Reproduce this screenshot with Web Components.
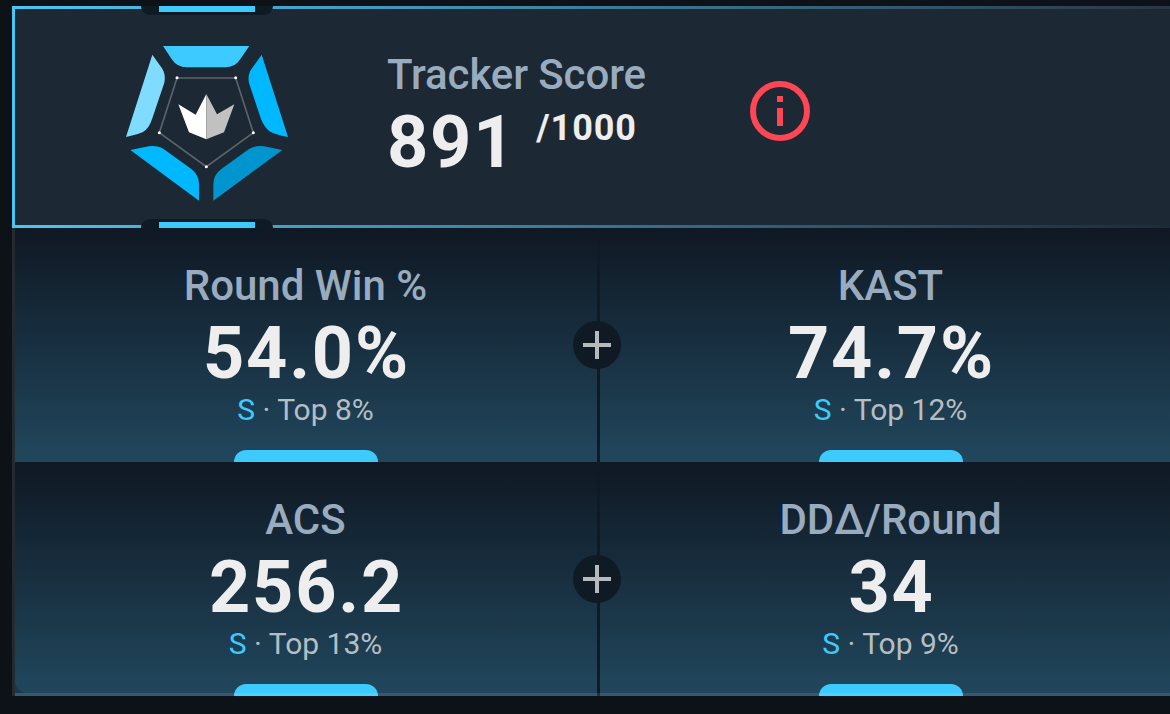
<!DOCTYPE html>
<html lang="en">
<head>
<meta charset="utf-8">
<title>Tracker Score</title>
<style>
    :root {
        --bg: #0d1218;
        --notch: #0f1a24;
        --surface: #1c2833;
        --accent: #3dcbff;
        --label: #99abbf;
        --value: #eeeeee;
        --muted: #b5bec4;
        --danger: #ff4655;
    }

    html, body {
        margin: 0;
        height: 100%;
        overflow: hidden;
        background: var(--bg);
        font-family: Roboto, sans-serif;
    }
</style>
</head>
<body>
<score-card>
    <score-header slot="header" value="891" max="1000">Tracker Score</score-header>
    <stat-row>
        <stat-cell value="54.0%" rank="S" top="Top 8%">Round Win %</stat-cell>
        <stat-cell value="74.7%" rank="S" top="Top 12%">KAST</stat-cell>
    </stat-row>
    <stat-row>
        <stat-cell value="256.2" rank="S" top="Top 13%">ACS</stat-cell>
        <stat-cell value="34" rank="S" top="Top 9%">DDΔ/Round</stat-cell>
    </stat-row>
</score-card>

<script>
function makeTemplate(css, html) {
    const template = document.createElement("template");
    template.innerHTML = `<style>${css}</style>${html}`;
    return template;
}

const cardTemplate = makeTemplate(/*css*/`
    :host {
        display: block;
        box-sizing: border-box;
        width: 1173px;
        padding: 6px 0 0 12px;
    }

    .rows {
        position: relative;
        width: 1167px;
        padding-left: 3px;
    }

    .frame {
        position: absolute;
        inset: 0;
        box-sizing: border-box;
        border: solid rgba(255, 255, 255, .1);
        border-width: 0 0 3px 3px;
        background: radial-gradient(circle at 100% 0, transparent 14px, rgba(15, 26, 36, .3) 15px) 0 100% / 14px 14px no-repeat;
        pointer-events: none;
    }
`, /*html*/`
    <slot name="header"></slot>
    <div class="rows">
        <slot></slot>
        <div class="frame"></div>
    </div>
`);

class ScoreCard extends HTMLElement {
    constructor() {
        super();
        this.attachShadow({mode: "open"}).append(cardTemplate.content.cloneNode(true));
    }
}

const emblemTemplate = makeTemplate(/*css*/`
    :host {
        display: block;
        width: 200px;
        height: 190px;
    }

    svg {
        display: block;
    }
`, /*html*/`
    <svg width="200" height="190" viewBox="0 0 600 570">
        <path fill="#3dcbff" d="M159 48H418L389 90Q374 112 347 112H229Q202 112 187 90Z"/>
        <path fill="#80dcff" d="M127 74L156 115Q168 133 163 158L127 265Q118 295 99 306Q88 312 48 321Z"/>
        <path fill="#00b8ff" d="M455 74L426 115Q412 133 417 159L453 267Q464 295 481 305Q493 312 534 321Z"/>
        <path fill="#00b8ff" d="M61 360L116 349Q142 345 162 358L244 417Q267 434 267 464V512Z"/>
        <path fill="#0095cf" d="M517 360L462 349Q436 345 416 358L334 417Q310 434 310 464V512Z"/>
        <path fill="none" stroke="#5b636b" stroke-width="5" d="M201 144H377L430 308L289 410L148 308Z"/>
        <g fill="#fff">
            <circle cx="201" cy="143" r="4.5"/>
            <circle cx="377" cy="143" r="4.5"/>
            <circle cx="430" cy="308" r="4.5"/>
            <circle cx="289" cy="410" r="4.5"/>
            <circle cx="148" cy="308" r="4.5"/>
        </g>
        <path fill="#fff" d="M289 192L257 254L205 223L237 307L289 328Z"/>
        <path fill="#c1c1c1" d="M289 192L321 253L373 223L342 307L289 328Z"/>
    </svg>
`);

class ScoreEmblem extends HTMLElement {
    constructor() {
        super();
        this.attachShadow({mode: "open"}).append(emblemTemplate.content.cloneNode(true));
    }
}

const headerTemplate = makeTemplate(/*css*/`
    :host {
        display: flex;
        position: relative;
        box-sizing: border-box;
        height: 222px;
        padding-left: 98px;
        background: var(--surface);
    }

    .line {
        position: absolute;
        left: 0;
        right: 0;
        height: 3px;
    }

    .line.top {
        top: 0;
        background: linear-gradient(90deg, #4cc6f4, #2a3644);
    }

    .line.bottom {
        bottom: 0;
        background: linear-gradient(90deg, #4cc6f4, #1c2a37);
    }

    .side {
        position: absolute;
        left: 0;
        top: 0;
        bottom: 0;
        width: 3px;
        background: #49c5f3;
    }

    .notch {
        position: absolute;
        left: 129px;
        width: 132px;
        height: 9px;
        background: var(--notch);
        display: flex;
        justify-content: center;
    }

    .notch::before {
        content: "";
        width: 96px;
        height: 6px;
        background: var(--accent);
    }

    .notch.top {
        top: 0;
        border-radius: 0 0 9px 9px;
    }

    .notch.bottom {
        bottom: 0;
        align-items: flex-end;
        border-radius: 9px 9px 0 0;
    }

    score-emblem {
        margin-top: 24px;
    }

    .text {
        width: 362px;
        padding: 45px 0 0 77px;
        box-sizing: border-box;
    }

    .label {
        color: var(--label);
        font-size: 42px;
        line-height: 48px;
        font-weight: 500;
        letter-spacing: -.1px;
        white-space: nowrap;
    }

    .score {
        display: flex;
        align-items: flex-start;
        margin-top: 8px;
        color: var(--value);
        font-weight: 700;
        letter-spacing: .025em;
    }

    .value {
        font-size: 72px;
        line-height: 72px;
        letter-spacing: .025em;
    }

    .max {
        font-size: 36px;
        line-height: 42px;
        letter-spacing: .025em;
        margin-left: 20px;
    }

    .info {
        margin: 75px 0 0 78px;
    }
`, /*html*/`
    <div class="line top"></div>
    <div class="line bottom"></div>
    <div class="side"></div>
    <div class="notch top"></div>
    <div class="notch bottom"></div>
    <score-emblem></score-emblem>
    <div class="text">
        <div class="label"><slot></slot></div>
        <div class="score">
            <span class="value"></span>
            <span class="max"></span>
        </div>
    </div>
    <svg class="info" width="60" height="60" viewBox="0 0 20 20" fill="var(--danger)">
        <circle cx="10" cy="10" r="9" fill="none" stroke="var(--danger)" stroke-width="2"/>
        <path d="M9 5h2v2H9zM9 9h2v6H9z"/>
    </svg>
`);

class ScoreHeader extends HTMLElement {
    constructor() {
        super();
        const shadow = this.attachShadow({mode: "open"});
        shadow.append(headerTemplate.content.cloneNode(true));

        shadow.querySelector(".value").textContent = this.getAttribute("value");
        shadow.querySelector(".max").textContent = `/${this.getAttribute("max")}`;
    }
}

const rowTemplate = makeTemplate(/*css*/`
    :host {
        display: grid;
        grid-template-columns: 582px 582px;
        column-gap: 3px;
        position: relative;
        height: 234px;
        background: var(--notch);
    }

    .plus {
        position: absolute;
        left: 558px;
        top: 93px;
    }
`, /*html*/`
    <slot></slot>
    <svg class="plus" width="48" height="48" viewBox="0 0 48 48">
        <circle cx="24" cy="24" r="24" fill="#0f1a24"/>
        <path fill="#b7babd" d="M22 10h4v12h12v4H26v12h-4V26H10v-4h12z"/>
    </svg>
`);

class StatRow extends HTMLElement {
    constructor() {
        super();
        this.attachShadow({mode: "open"}).append(rowTemplate.content.cloneNode(true));
    }
}

const cellTemplate = makeTemplate(/*css*/`
    :host {
        display: flex;
        flex-direction: column;
        align-items: center;
        box-sizing: border-box;
        height: 234px;
        padding-top: 34px;
        background: linear-gradient(#0f1823, #21475d);
        white-space: nowrap;
    }

    .label {
        padding-right: 1px;
        color: var(--label);
        font-size: 42px;
        line-height: 48px;
        font-weight: 500;
    }

    .value {
        margin-top: 8px;
        padding-left: 1px;
        color: var(--value);
        font-size: 72px;
        line-height: 72px;
        font-weight: 700;
        letter-spacing: .025em;
    }

    .sub {
        margin-top: 2px;
        padding-right: 1px;
        color: var(--muted);
        font-size: 30px;
        line-height: 36px;
    }

    .rank {
        color: var(--accent);
    }

    .bar {
        width: 144px;
        height: 12px;
        margin-top: auto;
        border-radius: 12px 12px 0 0;
        background: var(--accent);
    }
`, /*html*/`
    <div class="label"><slot></slot></div>
    <div class="value"></div>
    <div class="sub"><span class="rank"></span> · <span class="top"></span></div>
    <div class="bar"></div>
`);

class StatCell extends HTMLElement {
    constructor() {
        super();
        const shadow = this.attachShadow({mode: "open"});
        shadow.append(cellTemplate.content.cloneNode(true));

        shadow.querySelector(".value").textContent = this.getAttribute("value");
        shadow.querySelector(".rank").textContent = this.getAttribute("rank");
        shadow.querySelector(".top").textContent = this.getAttribute("top");
    }
}

customElements.define("score-emblem", ScoreEmblem);
customElements.define("score-header", ScoreHeader);
customElements.define("stat-cell", StatCell);
customElements.define("stat-row", StatRow);
customElements.define("score-card", ScoreCard);
</script>
</body>
</html>
